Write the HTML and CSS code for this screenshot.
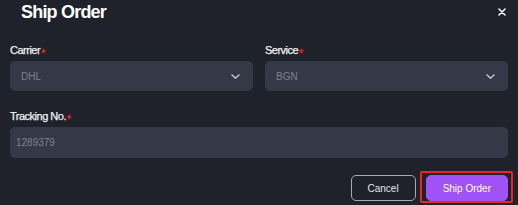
FILE: index.html
```html
<!DOCTYPE html>
<html lang="en">
<head>
  <meta charset="UTF-8">
  <title>Ship Order</title>
  <link rel="stylesheet" href="styles.css">
</head>
<body>
  <div class="dialog">
    <!-- Title bar -->
    <div class="dialog-header">
      <h2>Ship Order</h2>
      <button class="close-btn" aria-label="Close">
        <svg width="8" height="8" viewBox="0 0 8 8"><path d="M1 1L7 7M7 1L1 7" stroke="#fff" stroke-width="1.5" stroke-linecap="round"/></svg>
      </button>
    </div>

    <!-- Form fields -->
    <div class="field-row">
      <div class="field">
        <label>Carrier<span class="req">*</span></label>
        <div class="select">
          <span>DHL</span>
          <svg width="9" height="5" viewBox="0 0 9 5"><path d="M0.8 0.8L4.5 4.2L8.2 0.8" fill="none" stroke="#d0d2d8" stroke-width="1.2" stroke-linecap="round" stroke-linejoin="round"/></svg>
        </div>
      </div>
      <div class="field">
        <label>Service<span class="req">*</span></label>
        <div class="select">
          <span>BGN</span>
          <svg width="9" height="5" viewBox="0 0 9 5"><path d="M0.8 0.8L4.5 4.2L8.2 0.8" fill="none" stroke="#d0d2d8" stroke-width="1.2" stroke-linecap="round" stroke-linejoin="round"/></svg>
        </div>
      </div>
    </div>

    <div class="field tracking">
      <label>Tracking No.<span class="req">*</span></label>
      <input type="text" placeholder="1289379">
    </div>

    <!-- Actions -->
    <div class="dialog-footer">
      <button class="btn btn-cancel">Cancel</button>
      <button class="btn btn-primary">Ship Order</button>
    </div>
  </div>
</body>
</html>
```

FILE: styles.css
```css
* {
  margin: 0;
  padding: 0;
  box-sizing: border-box;
  font-family: "Liberation Sans", Arial, sans-serif;
}

body {
  background-color: #20222b;
  width: 518px;
  height: 205px;
  overflow: hidden;
}

.dialog {
  padding: 0 10px;
}

.dialog-header {
  display: flex;
  justify-content: space-between;
  align-items: flex-start;
  height: 43px;
  padding-top: 1px;
}

.dialog-header h2 {
  color: #fff;
  font-size: 18px;
  line-height: 22px;
  font-weight: bold;
  letter-spacing: -0.8px;
  margin-left: 11px;
}

.close-btn {
  background: none;
  border: none;
  width: 8px;
  height: 8px;
  margin-top: 7px;
  margin-right: 2px;
  display: flex;
  cursor: pointer;
}

.field-row {
  display: flex;
  gap: 12px;
}

.field {
  flex: 1;
  display: flex;
  flex-direction: column;
}

.field label {
  color: #f0f1f3;
  font-size: 11px;
  line-height: 14px;
  letter-spacing: -0.5px;
  -webkit-text-stroke: 0.25px #f0f1f3;
  margin-bottom: 4px;
}

.req {
  color: #e3262b;
  -webkit-text-stroke: 0.3px #e3262b;
  font-size: 10px;
  margin-left: 1px;
  vertical-align: -3px;
  line-height: 0;
}

.select {
  height: 30px;
  background-color: #353947;
  border-radius: 5px;
  display: flex;
  align-items: center;
  justify-content: space-between;
  padding: 0 13px 0 11px;
  color: #7f828c;
  font-size: 10px;
}

.tracking {
  margin-top: 18px;
}

.tracking input {
  height: 31px;
  background-color: #353947;
  border: none;
  border-radius: 5px;
  padding: 0 6px;
  font-size: 10px;
  color: #d0d2d8;
  outline: none;
}

.tracking input::placeholder {
  color: #7f828c;
}

.dialog-footer {
  display: flex;
  justify-content: flex-end;
  gap: 10px;
  margin-top: 17px;
}

.btn {
  height: 26px;
  padding: 0 16px;
  font-size: 10px;
  border-radius: 5px;
  cursor: pointer;
}

.btn-cancel {
  background: transparent;
  color: #e4e5e8;
  border: 1px solid #a9abb1;
}

.btn-primary {
  position: relative;
  background-color: #a052f6;
  color: #fff;
  border: 1px solid #a052f6;
}

/* highlight box around the main action */
.btn-primary::after {
  content: "";
  position: absolute;
  top: -5px;
  left: -7px;
  right: -6px;
  bottom: -3px;
  border: 2px solid #e6262a;
  border-radius: 2px;
}
```
